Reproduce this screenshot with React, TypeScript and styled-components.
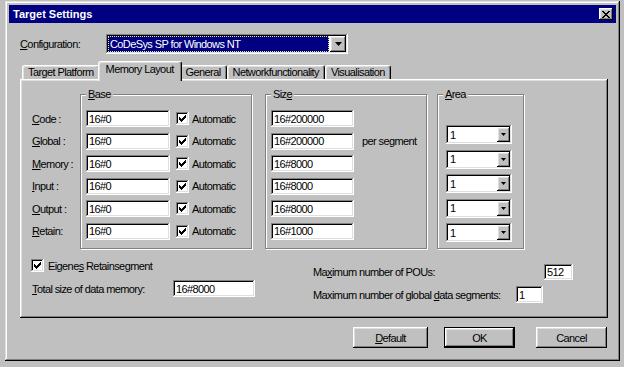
import React from "react";
import styled, { createGlobalStyle, css } from "styled-components";

const GlobalStyle = createGlobalStyle`
  html, body { margin: 0; padding: 0; background: #c0c0c0; }
  body {
    font-family: "Liberation Sans", Arial, sans-serif;
    font-size: 11px;
    letter-spacing: -0.6px;
    color: #000;
  }
  * { box-sizing: border-box; }
`;

const raised = css`
  background: #c0c0c0;
  box-shadow: inset -1px -1px #000, inset 1px 1px #fff, inset -2px -2px #808080, inset 2px 2px #dfdfdf;
`;

const sunken = css`
  background: #fff;
  box-shadow: inset -1px -1px #fff, inset 1px 1px #808080, inset -2px -2px #dfdfdf, inset 2px 2px #000;
`;

const Page = styled.div`
  padding: 1px 0 0 5px;
`;

const Window = styled.div`
  width: 615px;
  height: 360px;
  padding: 4px;
  display: flex;
  flex-direction: column;
  background: #c0c0c0;
  box-shadow: inset -1px -1px #000, inset 1px 1px #dfdfdf, inset -2px -2px #808080, inset 2px 2px #fff;
`;

const TitleBar = styled.div`
  height: 18px;
  background: #000080;
  display: flex;
  align-items: center;
  justify-content: space-between;
  padding: 0 3px 0 4px;
`;

const Title = styled.span`
  color: #fff;
  font-weight: bold;
  letter-spacing: 0;
`;

const CloseButton = styled.div`
  ${raised};
  width: 14px;
  height: 12px;
  display: flex;
  align-items: center;
  justify-content: center;
`;

const Content = styled.div`
  padding: 0 8px 0 11px;
  display: flex;
  flex-direction: column;
`;

const ConfigRow = styled.div`
  margin-top: 11px;
  height: 20px;
  display: flex;
  align-items: center;
`;

const Label = styled.span<{ $w?: number }>`
  display: inline-block;
  white-space: nowrap;
  ${(p) => (p.$w ? `width: ${p.$w}px; flex: none;` : "")}
`;

const Key = styled.u`
  text-decoration: underline;
`;

const Combo = styled.div<{ $w: number; $h: number }>`
  ${sunken};
  width: ${(p) => p.$w}px;
  height: ${(p) => p.$h}px;
  padding: 2px;
  display: flex;
  align-items: stretch;
`;

const ComboValue = styled.div<{ $selected?: boolean }>`
  flex: 1;
  padding-left: ${(p) => (p.$selected ? 1 : 2)}px;
  display: flex;
  align-items: center;
  white-space: nowrap;
  ${(p) =>
    p.$selected &&
    css`
      background: #000080;
      color: #fff;
      border: 1px dotted #e8e890;
      margin-right: 1px;
    `}
`;

const DropButton = styled.div<{ $w: number }>`
  ${raised};
  width: ${(p) => p.$w}px;
  display: flex;
  align-items: center;
  justify-content: center;
`;

const TabStrip = styled.div`
  margin-top: 7px;
  height: 18px;
  padding-left: 2px;
  display: flex;
  align-items: flex-end;
  position: relative;
  z-index: 1;
`;

const Tab = styled.div<{ $active?: boolean }>`
  background: #c0c0c0;
  border: 1px solid;
  border-color: #fff #000 transparent #fff;
  border-bottom: none;
  border-radius: 3px 3px 0 0;
  box-shadow: inset -1px 0 #808080, inset 1px 1px #dfdfdf;
  white-space: nowrap;
  height: 14px;
  line-height: 13px;
  padding: 0 5px;
  ${(p) =>
    p.$active &&
    css`
      height: 20px;
      line-height: 15px;
      margin: 0 -2px -2px;
      padding: 0 7px;
      position: relative;
    `}
`;

const Panel = styled.div`
  ${raised};
  width: 588px;
  height: 239px;
  padding: 2px 0 0 12px;
  display: flex;
  flex-direction: column;
`;

const TopSection = styled.div`
  margin-top: 13px;
  display: flex;
  align-items: flex-start;
`;

const LabelColumn = styled.div`
  width: 48px;
  padding-top: 16px;
  display: flex;
  flex-direction: column;
  gap: 5.6px;
`;

const RowLabel = styled.div`
  height: 17px;
  display: flex;
  align-items: center;
  white-space: nowrap;
`;

const Group = styled.div<{ $w: number; $ml: number; $pad: string; $gap: number }>`
  position: relative;
  width: ${(p) => p.$w}px;
  margin-left: ${(p) => p.$ml}px;
  padding: ${(p) => p.$pad};
  border: 1px solid #808080;
  box-shadow: inset 1px 1px #fff, 1px 1px #fff;
  display: flex;
  flex-direction: column;
  gap: ${(p) => p.$gap}px;
`;

const Legend = styled.span`
  position: absolute;
  top: -7px;
  left: 5px;
  padding: 0 2px;
  line-height: 12px;
  background: #c0c0c0;
`;

const FieldRow = styled.div`
  height: 17px;
  display: flex;
  align-items: center;
  white-space: nowrap;
`;

const TextField = styled.div<{ $w: number; $h?: number }>`
  ${sunken};
  width: ${(p) => p.$w}px;
  height: ${(p) => p.$h ?? 17}px;
  flex: none;
  padding-left: 3px;
  display: flex;
  align-items: center;
`;

const CheckBox = styled.div`
  ${sunken};
  width: 13px;
  height: 13px;
  flex: none;
  display: flex;
  align-items: center;
  justify-content: center;
`;

const CheckRow = styled.div<{ $ml: number; $gap: number }>`
  display: flex;
  align-items: center;
  margin-left: ${(p) => p.$ml}px;
  gap: ${(p) => p.$gap}px;
`;

const Suffix = styled.span`
  margin-left: 8px;
`;

const BottomSection = styled.div`
  margin-top: 10px;
  display: flex;
`;

const LeftCol = styled.div`
  width: 281px;
  display: flex;
  flex-direction: column;
  gap: 8px;
`;

const RightCol = styled.div`
  padding-top: 5px;
  display: flex;
  flex-direction: column;
  gap: 6px;
`;

const InlineRow = styled.div`
  display: flex;
  align-items: center;
`;

const ButtonRow = styled.div`
  margin-top: 9px;
  padding-right: 1px;
  display: flex;
  justify-content: flex-end;
`;

const Button = styled.div<{ $w: number; $ml?: number; $default?: boolean }>`
  ${raised};
  width: ${(p) => p.$w}px;
  height: 21px;
  margin-left: ${(p) => p.$ml ?? 0}px;
  display: flex;
  align-items: center;
  justify-content: center;
  ${(p) =>
    p.$default &&
    css`
      border: 1px solid #000;
    `}
`;

const Arrow = () => (
  <svg width="7" height="4" viewBox="0 0 7 4">
    <path d="M0 0h7L3.5 4z" fill="#000" />
  </svg>
);

const SmallArrow = () => (
  <svg width="5" height="3" viewBox="0 0 5 3">
    <path d="M0 0h5L2.5 3z" fill="#000" />
  </svg>
);

const Check = () => (
  <svg width="7" height="7" viewBox="0 0 7 7" shapeRendering="crispEdges">
    <path
      d="M6 0h1v3h-1zM5 1h1v3h-1zM4 2h1v3h-1zM3 3h1v3h-1zM2 4h1v3h-1zM1 3h1v3h-1zM0 2h1v3h-1z"
      fill="#000"
    />
  </svg>
);

const CloseIcon = () => (
  <svg width="8" height="7" viewBox="0 0 8 7" shapeRendering="crispEdges">
    <path
      d="M0 0h2v1h-2zM6 0h2v1h-2zM1 1h2v1h-2zM5 1h2v1h-2zM2 2h4v1h-4zM3 3h2v1h-2zM2 4h4v1h-4zM1 5h2v1h-2zM5 5h2v1h-2zM0 6h2v1h-2zM6 6h2v1h-2z"
      fill="#000"
    />
  </svg>
);

const rows: { key: string; rest: string; base: string; size: string }[] = [
  { key: "C", rest: "ode :", base: "16#0", size: "16#200000" },
  { key: "G", rest: "lobal :", base: "16#0", size: "16#200000" },
  { key: "M", rest: "emory :", base: "16#0", size: "16#8000" },
  { key: "I", rest: "nput :", base: "16#0", size: "16#8000" },
  { key: "O", rest: "utput :", base: "16#0", size: "16#8000" },
  { key: "R", rest: "etain:", base: "16#0", size: "16#1000" },
];

const tabs = ["Target Platform", "Memory Layout", "General", "Networkfunctionality", "Visualisation"];

export default function App() {
  return (
    <Page>
      <GlobalStyle />
      <Window>
        <TitleBar>
          <Title>Target Settings</Title>
          <CloseButton>
            <CloseIcon />
          </CloseButton>
        </TitleBar>
        <Content>
          <ConfigRow>
            <Label $w={86}>
              <Key>C</Key>onfiguration:
            </Label>
            <Combo $w={242} $h={20}>
              <ComboValue $selected>CoDeSys SP for Windows NT</ComboValue>
              <DropButton $w={16}>
                <Arrow />
              </DropButton>
            </Combo>
          </ConfigRow>

          <TabStrip>
            {tabs.map((t) => (
              <Tab key={t} $active={t === "Memory Layout"}>
                {t}
              </Tab>
            ))}
          </TabStrip>

          <Panel>
            <TopSection>
              <LabelColumn>
                {rows.map((r) => (
                  <RowLabel key={r.key}>
                    <Key>{r.key}</Key>
                    {r.rest}
                  </RowLabel>
                ))}
              </LabelColumn>

              <Group $w={172} $ml={0} $pad="15px 0 8px 5px" $gap={5.6}>
                <Legend>
                  <Key>B</Key>ase
                </Legend>
                {rows.map((r) => (
                  <FieldRow key={r.key}>
                    <TextField $w={84}>{r.base}</TextField>
                    <CheckRow $ml={6} $gap={3}>
                      <CheckBox>
                        <Check />
                      </CheckBox>
                      Automatic
                    </CheckRow>
                  </FieldRow>
                ))}
              </Group>

              <Group $w={162} $ml={13} $pad="15px 0 8px 5px" $gap={5.6}>
                <Legend>
                  Siz<Key>e</Key>
                </Legend>
                {rows.map((r, i) => (
                  <FieldRow key={r.key}>
                    <TextField $w={83}>{r.size}</TextField>
                    {i === 1 && <Suffix>per segment</Suffix>}
                  </FieldRow>
                ))}
              </Group>

              <Group $w={87} $ml={10} $pad="30px 0 6px 8px" $gap={5.5}>
                <Legend>
                  <Key>A</Key>rea
                </Legend>
                {rows.map((r, i) =>
                  i < 5 ? (
                    <Combo key={r.key} $w={66} $h={19}>
                      <ComboValue>1</ComboValue>
                      <DropButton $w={13}>
                        <SmallArrow />
                      </DropButton>
                    </Combo>
                  ) : null
                )}
              </Group>
            </TopSection>

            <BottomSection>
              <LeftCol>
                <CheckRow $ml={-1} $gap={4}>
                  <CheckBox>
                    <Check />
                  </CheckBox>
                  <span>
                    Eigene<Key>s</Key> Retainsegment
                  </span>
                </CheckRow>
                <InlineRow>
                  <Label $w={141}>
                    <Key>T</Key>otal size of data memory:
                  </Label>
                  <TextField $w={82}>16#8000</TextField>
                </InlineRow>
              </LeftCol>
              <RightCol>
                <InlineRow>
                  <Label $w={231}>
                    Ma<Key>x</Key>imum number of POUs:
                  </Label>
                  <TextField $w={29} $h={16}>
                    512
                  </TextField>
                </InlineRow>
                <InlineRow>
                  <Label $w={203}>
                    Maximum number of global <Key>d</Key>ata segments:
                  </Label>
                  <TextField $w={27}>1</TextField>
                </InlineRow>
              </RightCol>
            </BottomSection>
          </Panel>

          <ButtonRow>
            <Button $w={75}>
              <span>
                <Key>D</Key>efault
              </span>
            </Button>
            <Button $w={71} $ml={16} $default>
              OK
            </Button>
            <Button $w={71} $ml={21}>
              Cancel
            </Button>
          </ButtonRow>
        </Content>
      </Window>
    </Page>
  );
}
